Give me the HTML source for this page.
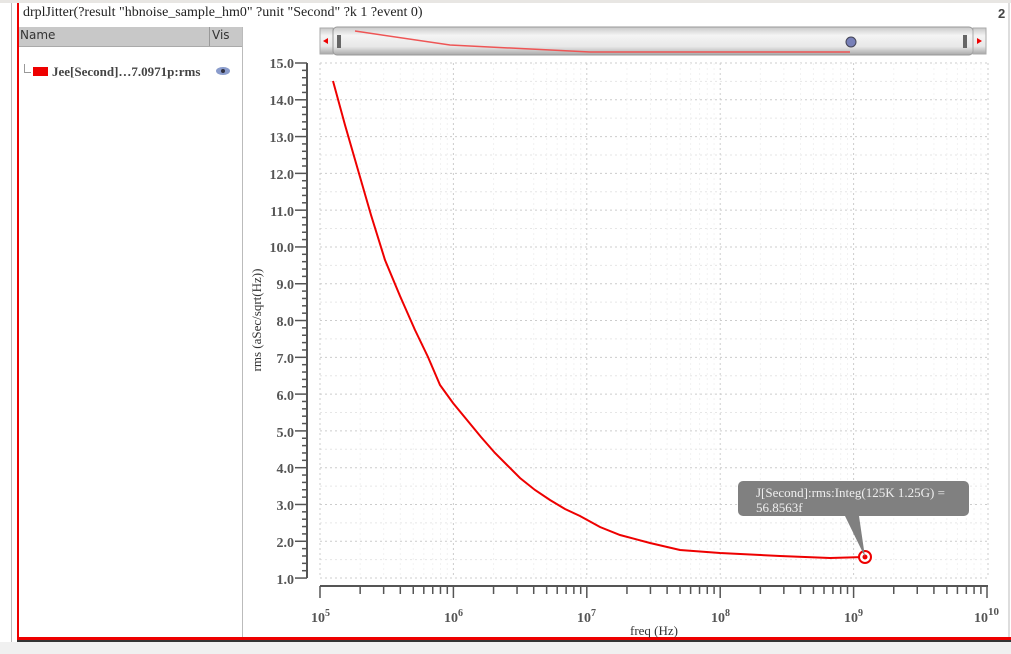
<!DOCTYPE html>
<html><head><meta charset="utf-8"><style>
body{margin:0;width:1011px;height:654px;background:#fff;overflow:hidden;font-family:"Liberation Serif","DejaVu Serif",serif;position:relative}
.t{position:absolute;font-size:13px;color:#222}
</style></head><body>
<div style="position:absolute;left:0;top:0;width:1011px;height:3px;background:#e8e6e3"></div>
<div style="position:absolute;left:11px;top:3px;width:1px;height:640px;background:#bbb"></div>
<div style="position:absolute;left:17px;top:3px;width:2px;height:638px;background:#e00"></div>
<div style="position:absolute;left:1008px;top:3px;width:2px;height:640px;background:#ddd"></div>
<div style="position:absolute;left:17px;top:637px;width:994px;height:3px;background:#e00"></div>
<div style="position:absolute;left:17px;top:640px;width:994px;height:2px;background:#333"></div>
<div style="position:absolute;left:0;top:642px;width:1011px;height:12px;background:#f0f0f0"></div>
<div class="t" style="left:23px;top:5px;font-size:14px">drplJitter(?result "hbnoise_sample_hm0" ?unit "Second" ?k 1 ?event 0)</div>
<div class="t" style="left:998px;top:6px;font-weight:bold;font-family:'Liberation Sans',sans-serif;color:#444">2</div>
<div style="position:absolute;left:19px;top:27px;width:223px;height:19px;background:#c8c8c8;border-bottom:1px solid #aaa"></div>
<div style="position:absolute;left:209px;top:27px;width:1px;height:19px;background:#999"></div>
<div class="t" style="left:20px;top:28px;font-family:'DejaVu Sans',sans-serif;font-size:12px;color:#333">Name</div>
<div class="t" style="left:212px;top:28px;font-family:'DejaVu Sans',sans-serif;font-size:12px;color:#333">Vis</div>
<div style="position:absolute;left:242px;top:27px;width:1px;height:610px;background:#bbb"></div>
<div style="position:absolute;left:24px;top:64px;width:6px;height:8px;border-left:1px solid #999;border-bottom:1px solid #999"></div>
<div style="position:absolute;left:33px;top:67px;width:15px;height:9px;background:#e00"></div>
<div class="t" style="left:52px;top:64px;font-family:'Liberation Serif',serif;font-size:13px;font-weight:bold;color:#444;white-space:nowrap">Jee[Second]…7.0971p:rms</div>
<svg style="position:absolute;left:215px;top:66px" width="16" height="10"><ellipse cx="8" cy="5" rx="7" ry="4" fill="#8a9ccc"/><circle cx="8" cy="5" r="2" fill="#334"/></svg>
<svg id="s" style="position:absolute;left:0;top:0" width="1011" height="654">
<defs><linearGradient id="g" x1="0" y1="0" x2="0" y2="1"><stop offset="0" stop-color="#c8c8c8"/><stop offset=".3" stop-color="#f4f4f4"/><stop offset=".7" stop-color="#e8e8e8"/><stop offset="1" stop-color="#a8a8a8"/></linearGradient></defs>
<rect x="320" y="28" width="13" height="26" fill="url(#g)" stroke="#aaa"/>
<path d="M323 41 l5 -3 v6z" fill="#e00"/>
<rect x="333" y="27" width="640" height="28" rx="4" fill="url(#g)" stroke="#999"/>
<rect x="337" y="35" width="4" height="13" fill="#666"/>
<rect x="963" y="35" width="4" height="13" fill="#666"/>
<rect x="973" y="28" width="13" height="26" fill="url(#g)" stroke="#aaa"/>
<path d="M982 41 l-5 -3 v6z" fill="#e00"/>
<polyline points="355,31 450,45 590,52 850,52" fill="none" stroke="#e55" stroke-width="1.5"/>
<circle cx="851" cy="42" r="5" fill="#7880b8" stroke="#445"/>
<g id="grid"></g>
<polyline points="333,81 345,125 358,170 371,215 385,260 400,296 415,330 428,357 440,385 453,403 467,420 481,437 495,453 508,466 520,478 535,490 550,500 565,509 580,516 600,527 620,535 650,543 680,550 720,553 780,556 830,558 865,557" fill="none" stroke="#e00" stroke-width="2"/>
<circle cx="865" cy="557" r="6" fill="#fff" stroke="#e00" stroke-width="2"/><circle cx="865" cy="557" r="2.5" fill="#e00"/>
<path d="M743 481 h221 a5 5 0 0 1 5 5 v25 a5 5 0 0 1 -5 5 h-105 l6 41 l-20 -41 h-102 a5 5 0 0 1 -5 -5 v-25 a5 5 0 0 1 5 -5z" fill="#808080"/>
<text x="756" y="497" font-size="13" fill="#eee" font-family="Liberation Serif,serif">J[Second]:rms:Integ(125K 1.25G) =</text>
<text x="756" y="512" font-size="13" fill="#eee" font-family="Liberation Serif,serif">56.8563f</text>
<g font-family="Liberation Serif,serif" font-size="14" font-weight="bold" fill="#555" text-anchor="end">
<text x="294" y="68">15.0</text><text x="294" y="105">14.0</text><text x="294" y="142">13.0</text><text x="294" y="179">12.0</text><text x="294" y="216">11.0</text><text x="294" y="252">10.0</text><text x="294" y="289">9.0</text><text x="294" y="326">8.0</text><text x="294" y="363">7.0</text><text x="294" y="400">6.0</text><text x="294" y="437">5.0</text><text x="294" y="473">4.0</text><text x="294" y="510">3.0</text><text x="294" y="547">2.0</text><text x="294" y="584">1.0</text>
</g>
<text transform="translate(261,320) rotate(-90)" font-family="Liberation Serif,serif" font-size="13" fill="#333" text-anchor="middle">rms (aSec/sqrt(Hz))</text>
<g font-family="Liberation Serif,serif" font-size="14" font-weight="bold" fill="#555">
<text x="311" y="622">10<tspan dy="-6" font-size="10">5</tspan></text>
<text x="444" y="622">10<tspan dy="-6" font-size="10">6</tspan></text>
<text x="577" y="622">10<tspan dy="-6" font-size="10">7</tspan></text>
<text x="711" y="622">10<tspan dy="-6" font-size="10">8</tspan></text>
<text x="844" y="622">10<tspan dy="-6" font-size="10">9</tspan></text>
<text x="974" y="622">10<tspan dy="-7" font-size="11">10</tspan></text>
</g>
<text x="654" y="635" font-family="Liberation Serif,serif" font-size="13" fill="#333" text-anchor="middle">freq (Hz)</text>
</svg>
<script>
var g=document.getElementById('grid'),h='';
function y(v){return 63+(15-v)*36.79}
function X(d){return 320+d*133.4}
for(var v=1;v<=15;v+=0.5){var yy=y(v);h+='<line x1="320" x2="988" y1="'+yy+'" y2="'+yy+'" stroke="'+(v%1?'#e6e6e6':'#ccc')+'" stroke-dasharray="2,3"/>';}
for(var d=0;d<5;d++)for(var k=1;k<10;k++){var xx=X(d+Math.log10(k));h+='<line y1="63" y2="578" x1="'+xx+'" x2="'+xx+'" stroke="'+(k==1?'#ccc':'#f2f2f2')+'" stroke-dasharray="2,3"/>';}
h+='<line x1="988" x2="988" y1="63" y2="578" stroke="#ccc" stroke-dasharray="2,3"/>';
h+='<line x1="307" x2="307" y1="63" y2="578" stroke="#555" stroke-width="2"/>';
for(var i=0;i<=70;i++){var v=1+i*0.2,yy=y(v);var L=(i%5==0)?12:5;h+='<line x1="'+(307-L)+'" x2="307" y1="'+yy+'" y2="'+yy+'" stroke="#555" stroke-width="1.5"/>';}
h+='<line x1="320" x2="988" y1="586" y2="586" stroke="#555" stroke-width="2"/>';
for(var d=0;d<=5;d++)for(var k=1;k<10;k++){if(d==5&&k>1)break;var xx=X(d+Math.log10(k));h+='<line y1="586" y2="'+(k==1?598:594)+'" x1="'+xx+'" x2="'+xx+'" stroke="#555" stroke-width="1.5"/>';}
g.innerHTML=h;
</script>
</body></html>
